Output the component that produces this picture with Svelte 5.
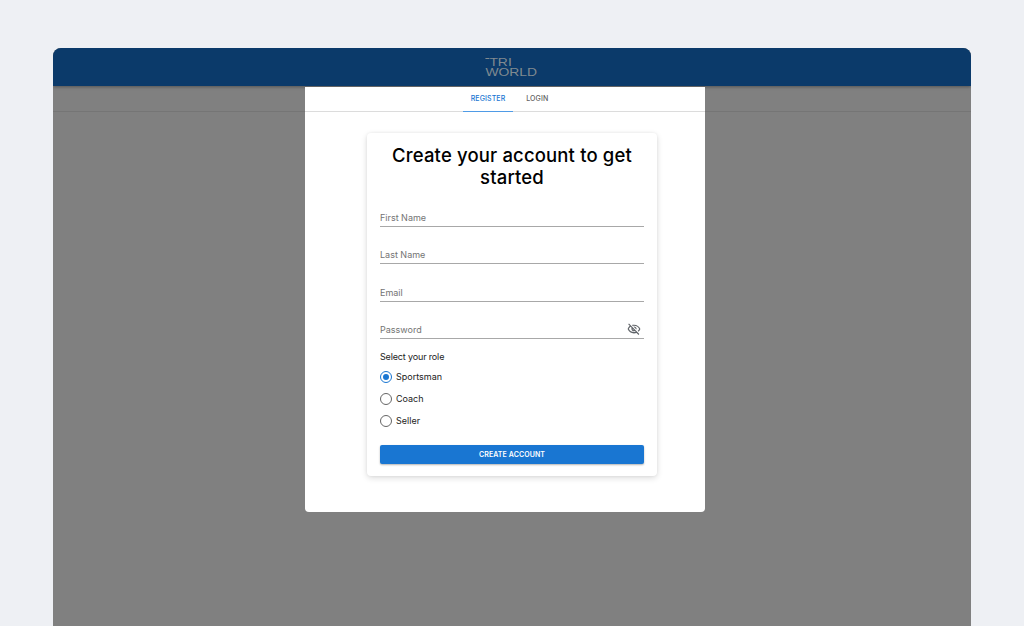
<script>
  const fields = [
    { label: 'First Name' },
    { label: 'Last Name' },
    { label: 'Email' },
    { label: 'Password', eye: true }
  ];
  const roles = ['Sportsman', 'Coach', 'Seller'];
  let role = $state('Sportsman');
</script>

<div class="page">
  <div class="window">
    <header class="topbar">
      <div class="logo">
        <div class="logo-top"><span class="dash"></span><span>TRI</span></div>
        <div class="logo-bottom">WORLD</div>
      </div>
    </header>
    <div class="backdrop">
      <div class="strip"></div>
    </div>

    <div class="modal">
      <nav class="tabs">
        <button class="tab active">REGISTER</button>
        <button class="tab">LOGIN</button>
      </nav>
      <div class="body">
        <form class="card">
          <h1>Create your account to get started</h1>
          {#each fields as f (f.label)}
            <div class="field">
              <span class="ph">{f.label}</span>
              {#if f.eye}
                <svg class="eye" viewBox="0 0 24 24" width="14" height="14" fill="#5f6368">
                  <path d="M12 6.5a9.77 9.77 0 0 1 8.82 5.5 9.64 9.64 0 0 1-2.41 3.12l1.41 1.41A11.8 11.8 0 0 0 23 12C21.27 7.61 17 4.5 12 4.5c-1.27 0-2.49.2-3.64.57l1.65 1.65c.65-.13 1.31-.22 1.99-.22zm-1.07 1.14L13 9.71c.57.25 1.03.71 1.28 1.28l2.07 2.07c.08-.34.14-.7.14-1.07C16.5 9.51 14.48 7.5 12 7.5c-.37 0-.72.05-1.07.14zM2.01 3.87l2.68 2.68A11.74 11.74 0 0 0 1 12c1.73 4.39 6 7.5 11 7.5 1.52 0 2.98-.29 4.32-.82l3.42 3.42 1.41-1.41L3.42 2.45 2.01 3.87zm7.5 7.5 2.61 2.61c-.04.01-.08.02-.12.02a2.5 2.5 0 0 1-2.5-2.5c0-.05.01-.08.01-.13zm-3.4-3.4 1.75 1.75a4.6 4.6 0 0 0-.36 1.78 4.5 4.5 0 0 0 6.27 4.14l.98.98c-.88.24-1.8.38-2.75.38a9.77 9.77 0 0 1-8.82-5.5c.7-1.43 1.72-2.61 2.93-3.53z"/>
                </svg>
              {/if}
            </div>
          {/each}

          <p class="role-title">Select your role</p>
          <div class="roles">
            {#each roles as r (r)}
              <label class="radio">
                <input type="radio" name="role" value={r} bind:group={role} />
                <span class="dot" class:on={role === r}></span>
                <span>{r}</span>
              </label>
            {/each}
          </div>

          <button class="submit" type="button">CREATE ACCOUNT</button>
        </form>
      </div>
    </div>
  </div>
</div>

<style>
  :global(body) {
    margin: 0;
    background: #eef0f4;
    font-family: "Inter", "Noto Sans", sans-serif;
  }
  .page {
    height: 626px;
    padding: 48px 53px 0;
    box-sizing: border-box;
    overflow: hidden;
  }
  .window {
    position: relative;
    height: 620px;
    border-radius: 8px 8px 0 0;
    overflow: hidden;
    display: flex;
    flex-direction: column;
    background: #808080;
  }
  .topbar {
    height: 38px;
    flex: none;
    background: #0b3a6a;
    display: flex;
    justify-content: center;
    align-items: center;
    box-shadow: 0 1px 3px rgba(0, 0, 0, 0.35);
    z-index: 1;
  }
  .logo {
    width: 41px;
    color: #808a90;
    font-family: "Liberation Sans", sans-serif;
    line-height: 10px;
    font-size: 10.5px;
    margin-top: -1px;
    transform: scaleX(1.32);
  }
  .logo-top {
    display: flex;
    align-items: flex-start;
    height: 10px;
  }
  .dash {
    width: 3px;
    height: 1px;
    background: #808a90;
    margin-top: 1px;
  }
  .backdrop {
    flex: 1;
    background: #808080;
  }
  .strip {
    height: 25px;
    border-bottom: 1px solid #757575;
  }
  .modal {
    position: absolute;
    left: 252px;
    top: 39px;
    width: 400px;
    height: 425px;
    background: #fff;
    border-radius: 0 0 4px 4px;
    z-index: 2;
  }
  .tabs {
    height: 24px;
    display: flex;
    justify-content: center;
    border-bottom: 1px solid #dcdcdc;
    padding-left: 14px;
  }
  .tab {
    border: 0;
    background: none;
    padding: 0 8px 2px;
    font: 500 7px "Inter", sans-serif;
    color: #5f5f5f;
    letter-spacing: 0.1px;
    height: 25px;
    min-width: 50px;
  }
  .tab + .tab {
    min-width: 48px;
  }
  .tab.active {
    color: #1976d2;
    border-bottom: 1px solid #4f9be6;
  }
  .body {
    display: flex;
    justify-content: center;
    padding-top: 21px;
    padding-left: 14px;
  }
  .card {
    width: 290px;
    height: 343px;
    box-sizing: border-box;
    padding: 11px 13px 0;
    border-radius: 4px;
    background: #fff;
    box-shadow: 0 2px 6px rgba(0, 0, 0, 0.14), 0 0 3px rgba(0, 0, 0, 0.06);
    display: flex;
    flex-direction: column;
  }
  h1 {
    margin: 0 0 1.5px;
    font: 500 18.5px/22px "Inter", sans-serif;
    letter-spacing: 0.15px;
    color: #000;
    text-align: center;
    padding: 0 8px;
  }
  .field {
    height: 37.4px;
    box-sizing: border-box;
    border-bottom: 1px solid #a8a8a8;
    display: flex;
    align-items: flex-end;
    justify-content: space-between;
    padding-bottom: 2px;
    flex: none;
  }
  .ph {
    font-size: 9px;
    line-height: 12px;
    color: #747474;
  }
  .eye {
    margin-right: 3px;
  }
  .role-title {
    margin: 11.5px 0 3px;
    font-size: 9px;
    letter-spacing: -0.15px;
    line-height: 12px;
    color: #222;
  }
  .roles {
    display: flex;
    flex-direction: column;
  }
  .radio {
    display: flex;
    align-items: center;
    gap: 4px;
    height: 22px;
    font-size: 9px;
    color: #222;
  }
  .radio input {
    display: none;
  }
  .dot {
    width: 10px;
    height: 10px;
    box-sizing: content-box;
    border: 1px solid #666;
    border-radius: 50%;
    position: relative;
  }
  .dot.on {
    border-color: #1976d2;
  }
  .dot.on::after {
    content: "";
    position: absolute;
    inset: 2px;
    border-radius: 50%;
    background: #1976d2;
  }
  .submit {
    margin-top: 13px;
    height: 19px;
    border: 0;
    border-radius: 2px;
    background: #1976d2;
    color: #fff;
    font: 600 7px "Inter", sans-serif;
    letter-spacing: 0.1px;
    box-shadow: 0 1px 2px rgba(0, 0, 0, 0.3);
  }
</style>
